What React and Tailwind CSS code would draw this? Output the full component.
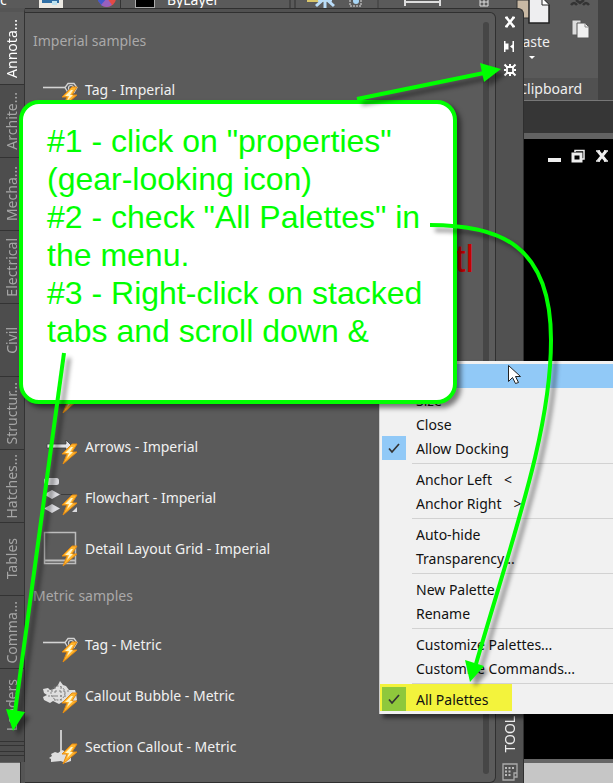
// src/App.jsx
import { useState } from 'react';

const TABS = [
  'Annota...',
  'Archite...',
  'Mecha...',
  'Electrical',
  'Civil',
  'Structur...',
  'Hatches...',
  'Tables',
  'Comma...',
  'Leaders',
];

const IMPERIAL = [
  { icon: 'tag', label: 'Tag - Imperial' },
  { icon: 'blank' },
  { icon: 'blank' },
  { icon: 'blank' },
  { icon: 'blank' },
  { icon: 'blank' },
  { icon: 'blank' },
  { icon: 'arrow', label: 'Arrows - Imperial' },
  { icon: 'flow', label: 'Flowchart - Imperial' },
  { icon: 'grid', label: 'Detail Layout Grid - Imperial' },
];

const METRIC = [
  { icon: 'tag', label: 'Tag - Metric' },
  { icon: 'bubble', label: 'Callout Bubble - Metric' },
  { icon: 'section', label: 'Section Callout - Metric' },
];

const MENU = [
  [{ label: 'Move' }, { label: 'Size' }, { label: 'Close' }, { label: 'Allow Docking', check: true }],
  [{ label: 'Anchor Left', hint: '<' }, { label: 'Anchor Right', hint: '>' }],
  [{ label: 'Auto-hide' }, { label: 'Transparency...' }],
  [{ label: 'New Palette' }, { label: 'Rename' }],
  [{ label: 'Customize Palettes...' }, { label: 'Customize Commands...' }],
];

function ToolIcon({ name }) {
  return (
    <svg viewBox="0 0 36 36" className="h-9 w-9 shrink-0 overflow-visible" aria-hidden="true">
      {name === 'tag' && (
        <g fill="none" stroke="#d4d4d4">
          <path d="M0 15.5H22" strokeWidth="1.6" />
          <path d="M25 11.5h6l3 4-3 5h-6l-3-5z" strokeWidth="1.3" />
          <circle cx="28" cy="16" r="2.5" strokeWidth="1.2" />
        </g>
      )}
      {name === 'arrow' && (
        <path d="M4 15h19v-4l6 6-6 6v-4H4z" fill="#e4e4e8" stroke="#3f3f3f" strokeWidth="0.8" />
      )}
      {name === 'flow' && (
        <g fill="#dcdce0">
          <rect x="1" y="-2" width="15" height="7" rx="2.5" />
          <path d="M9 10l8 4.500-8 4.500-8-4.500zM9 24l8 4.500-8 4.500-8-4.500z" />
          <path d="M29 32l5-5v5z" />
          <path d="M18 14.500h12v4" fill="none" stroke="#3c3c3c" />
        </g>
      )}
      {name === 'grid' && (
        <g fill="none" stroke="#bdbdbd" strokeWidth="1.500">
          <path d="M1.500 1.500h31v31h-31z" />
          <path d="M2 29.500h30" strokeWidth="2" />
        </g>
      )}
      {name === 'bubble' && (
        <g>
          <path
            d="M0 11l5-1 2 2 4-1 4-4 2-4 3 4 3 1 3 4h6l1 3 1 7-4 4-9-3-5 3-6-3-3 2-6-3-1-3 4-2-3-2z"
            fill="#dedede"
          />
          <circle cx="15" cy="15" r="7" fill="none" stroke="#777" strokeDasharray="2 1.500" />
          <path d="M4 13h22M5 18h19M12 9v14M18 9v14" stroke="#777" strokeWidth="0.9" strokeDasharray="2 2" />
        </g>
      )}
      {name === 'section' && (
        <g>
          <path d="M18 1V24" stroke="#c8c8c8" strokeWidth="2" />
          <path d="M8 25l4-2 3 1 4-3 5 2 4 2v7l-6 2-4-2-10 1v-3l-2-1 3-2z" fill="#dedede" />
        </g>
      )}
      {/* action bolt */}
      <path
        d="M29 15L19 25h5l-4 10L34 23h-5l5-8z"
        fill="#ffb52e"
        stroke="#e58a10"
        strokeWidth="1"
        strokeLinejoin="round"
      />
      <path d="M28 18l-6 6h4l-2 5 6-6h-3l3-5z" fill="#fff6c8" />
    </svg>
  );
}

function ToolList({ title, items, first }) {
  return (
    <section>
      <h2
        className={`flex items-center pl-2 text-sm text-[#aaa9a9] ${first ? 'h-[51px] pt-1' : 'h-[45px] pb-[2px]'}`}
      >
        {title}
      </h2>
      <ul>
        {items.map((item, i) => (
          <li key={i} className="h-[51px]">
            <button
              type="button"
              className="flex h-full w-full items-center gap-[6px] pl-[18px] text-left text-sm text-[#f1f1f1]"
              aria-label={item.label || 'Tool'}
            >
              <ToolIcon name={item.icon} />
              {item.label}
            </button>
          </li>
        ))}
      </ul>
    </section>
  );
}

function Ribbon() {
  return (
    <header className="flex h-[101px] overflow-hidden border-b border-[#777] bg-[#424242]">
      <div className="flex h-[9px] flex-1 bg-[#5a5a5a] text-sm text-white">
        <div className="flex h-0 w-full items-center">
          <span className="w-[38px]">c</span>
          <svg width="82" height="16" viewBox="0 0 82 16" className="shrink-0" aria-hidden="true">
            <path d="M1 0h24v16H1z" fill="#ece9e2" />
            <path d="M4 0h17v11H4z" fill="#3270a5" />
            <path d="M14 9h5v4h-5z" fill="#bfe3ef" />
            <circle cx="69" cy="6" r="9" fill="#e34a45" />
            <path d="M69 6L60 0v9l4 5z" fill="#4159cc" />
            <path d="M69 6L63 13a9 9 0 0 0 11 0z" fill="#9860bf" />
          </svg>
          <div className="flex items-center gap-3 border-l border-[#333] pl-[14px]">
            <span className="h-4 w-5 border border-[#aaa] bg-black" />
            <span>ByLayer</span>
          </div>
          <svg width="190" height="16" viewBox="0 0 190 16" className="ml-[70px] shrink-0 overflow-visible" aria-hidden="true">
            <path d="M1 0v16M6 0v16" stroke="#303030" />
            <path d="M18 0h20v10H18z" fill="#d9c66a" />
            <path d="M36 0v16M27 14l9-8 9 8M29 8h14" stroke="#b9dcf8" strokeWidth="3" fill="none" />
            <path d="M61 8v6h11V8" stroke="#ddd" fill="none" strokeDasharray="2 1" />
            <circle cx="67" cy="9" r="3" fill="#a9d6f5" />
            <path d="M89 0v16M210 0v16" stroke="#3c3c3c" />
            <path d="M116 6v8M151 6v8M116 10h35" stroke="#ddd" strokeWidth="2" />
            <path d="M191 6h8v8h-8zM195 6v8M191 10h8" stroke="#ddd" fill="none" />
          </svg>
        </div>
      </div>
      <div className="mr-[15px] flex w-[104px] shrink-0 flex-col bg-[#5a5a5a] text-sm text-[#eee]">
        <div className="flex flex-1 justify-between pl-[20px] pr-[6px]">
          <button type="button" className="flex flex-col items-center">
            <svg width="36" height="32" viewBox="0 0 36 32" aria-hidden="true">
              <path d="M3 0h15v18H3z" fill="#c9b9a4" stroke="#333" />
              <path d="M15 -2h13l7 7v18H15z" fill="#eeeef0" stroke="#222" strokeWidth="1.500" />
              <path d="M28 -2v7h7" fill="#fff" stroke="#222" />
            </svg>
            Paste
            <span className="mt-1 border-x-[3px] border-t-[3px] border-x-transparent border-t-white" />
          </button>
          <svg width="24" height="40" viewBox="0 0 24 40" aria-hidden="true">
            <path d="M3 5q3-4 6 0M21 5q-3-4-6 0M8 0l4 3 4-3" fill="none" stroke="#333" strokeWidth="2.500" />
            <path d="M4 20h9v15H4z" fill="#ddd" stroke="#555" />
            <path d="M9 23h8l4 4v11H9z" fill="#f0f0f0" stroke="#555" />
            <path d="M17 23v4h4" fill="none" stroke="#888" />
          </svg>
        </div>
        <div className="flex h-[22px] items-center justify-end bg-[#515151] pr-4">Clipboard</div>
      </div>
    </header>
  );
}

function DrawingWindow() {
  return (
    <main className="flex flex-1 flex-col">
      <div className="h-8 bg-[#363636]" />
      <div className="h-[6px] bg-[#626262]" />
      <div className="flex flex-1 items-start justify-end gap-[10px] bg-black pr-1 pt-[10px]">
        <button type="button" aria-label="Minimize">
          <svg width="14" height="14" viewBox="0 0 14 14">
            <path d="M1 9h13v4H1z" fill="#eee" />
          </svg>
        </button>
        <button type="button" aria-label="Restore">
          <svg width="14" height="14" viewBox="0 0 14 14">
            <path d="M4 3V1.500h9V10h-2" fill="none" stroke="#eee" strokeWidth="1.500" />
            <path d="M2 5h8v7H2z" fill="none" stroke="#eee" strokeWidth="3" />
            <path d="M5 8h2v2H5z" fill="#000" />
          </svg>
        </button>
        <button type="button" aria-label="Close drawing">
          <svg width="14" height="14" viewBox="0 0 14 14">
            <path d="M3 2l8 10M11 2L3 12" stroke="#eee" strokeWidth="3" />
            <path d="M1 2h4M9 2h4M1 12h4M9 12h4" stroke="#eee" strokeWidth="1.500" />
          </svg>
        </button>
      </div>
      <div className="h-6 border-t-4 border-[#666] bg-[#c6c6c6]" />
    </main>
  );
}

function ToolPalette() {
  const [tab, setTab] = useState(0);

  return (
    <aside className="absolute bottom-0 left-0 right-[89px] top-2 flex">
      {/* stacked tabs */}
      <div className="flex w-[25px] shrink-0 flex-col">
        <nav className="flex flex-col border-r border-t-4 border-[#333] border-t-[#555] bg-[#4d4d4d]">
          {TABS.map((name, i) => (
            <button
              key={name}
              type="button"
              onClick={() => setTab(i)}
              className={`flex h-[73px] items-center justify-center border-b border-[#333] text-sm ${
                i === tab ? 'bg-[#5b5b5b] text-white' : 'text-[#a5a5a5]'
              }`}
            >
              <span className="rotate-180 whitespace-nowrap [writing-mode:vertical-rl]">{name}</span>
            </button>
          ))}
          <span className="h-1 border-b border-[#333]" />
          <span className="h-[6px] border-b border-[#333]" />
          <span className="h-1 border-b border-[#333]" />
          <span className="h-[6px]" />
        </nav>
        <div className="ml-5 flex-1 border-l border-[#333] bg-[#555]" />
      </div>

      <div className="flex flex-1 rounded-tr-md border-r border-t border-[#2f2f2f] bg-[#515151] pt-[3px]">
        <div className="relative flex flex-1 justify-between rounded-r-md border-b border-r border-t border-[#303030] bg-[#5b5b5b]">
          <div className="flex-1">
            <ToolList title="Imperial samples" items={IMPERIAL} first />
            <ToolList title="Metric samples" items={METRIC} />
          </div>
          <p className="absolute right-[21px] top-[224px] font-['Liberation_Sans',sans-serif] text-[38px] leading-[44px] text-[#c40000]">
            tl
          </p>
          <div className="mb-2 mr-[6px] mt-[9px] w-[6px] rounded-full bg-[#464646]" />
        </div>

        <div className="flex w-[27px] flex-col items-center gap-[10px] pb-[2px] pt-[3px]">
          <button type="button" aria-label="Close palette">
            <svg width="14" height="14" viewBox="0 0 14 14">
              <path d="M3 2l8 10M11 2L3 12" stroke="#fff" strokeWidth="2.600" />
              <path d="M2 2.500h3M9 2.500h3M2 11.500h3M9 11.500h3" stroke="#fff" strokeWidth="1.500" />
            </svg>
          </button>
          <button type="button" aria-label="Auto-hide">
            <svg width="14" height="14" viewBox="0 0 14 14">
              <path d="M1 2h1.500v11H1zM2.500 4.500h3v6h-3zM11 2v11H9.500V9.500L7 7.500l2.500-2V2z" fill="#fff" />
            </svg>
          </button>
          <button type="button" aria-label="Properties">
            <svg width="14" height="14" viewBox="0 0 14 14">
              <path d="M4 4h6v6H4z" fill="none" stroke="#fff" strokeWidth="1.800" />
              <path
                d="M7 1v2M7 11v2M1 7h2M11 7h2M1.500 1.500l3 3M12.500 1.500l-3 3M1.500 12.500l3-3M12.500 12.500l-3-3"
                stroke="#fff"
                strokeWidth="2"
              />
            </svg>
          </button>
          <span className="mt-auto rotate-180 whitespace-nowrap text-sm text-[#eee] [writing-mode:vertical-rl]">
            TOOL PALETTES
          </span>
          <svg width="16" height="18" viewBox="0 0 16 18" aria-hidden="true">
            <path d="M1 1h14v9h-3v7H1zM12 10h3v4h-3" fill="none" stroke="#aaa" strokeWidth="1.300" />
            <path d="M3 5h2M6.500 5h2M10 5h2M3 8.500h2M6.500 8.500h2M3 12h2M6.500 12h2" stroke="#bbb" strokeWidth="2" />
          </svg>
        </div>
      </div>
    </aside>
  );
}

function CheckMark() {
  return (
    <svg width="14" height="14" viewBox="0 0 14 14" aria-hidden="true">
      <path d="M2 7.500l3 3.500 7-8" fill="none" stroke="#333" strokeWidth="1.700" />
    </svg>
  );
}

function ContextMenu() {
  const [docking, setDocking] = useState(true);
  const [all, setAll] = useState(true);

  return (
    <div
      role="menu"
      className="absolute left-[379px] right-0 top-[361px] border-l border-[#ccc] bg-[#f1f1f1] py-[3px] text-sm text-[#111] shadow-[4px_4px_4px_rgba(0,0,0,0.5)]"
    >
      {MENU.map((group, g) => (
        <div key={g}>
          {group.map((item, i) => (
            <button
              key={item.label}
              type="button"
              role={item.check ? 'menuitemcheckbox' : 'menuitem'}
              aria-checked={item.check ? docking : undefined}
              onClick={item.check ? () => setDocking((d) => !d) : undefined}
              className={`flex h-6 w-full items-center gap-[10px] pl-[2px] text-left ${
                g === 0 && i === 0 ? 'bg-[#91c9f7]' : ''
              }`}
            >
              <span
                className={`flex h-6 w-6 items-center justify-center ${
                  item.check && docking ? 'bg-[#91c9f7]' : ''
                }`}
              >
                {item.check && docking && <CheckMark />}
              </span>
              <span className="pt-[2px]">{item.label}</span>
              {item.hint && <span className="pl-[2px] pt-[2px]">{item.hint}</span>}
            </button>
          ))}
          <hr className="my-[3px] ml-8 border-[#d2d2d2]" />
        </div>
      ))}
      <button
        type="button"
        role="menuitemcheckbox"
        aria-checked={all}
        onClick={() => setAll((a) => !a)}
        className="-mt-[3px] flex h-[27px] w-[132px] items-center gap-[10px] bg-[#f3f33c] pl-[2px] pt-[3px] text-left"
      >
        <span className="flex h-6 w-6 items-center justify-center bg-[#8fc83c]">{all && <CheckMark />}</span>
        <span className="pt-[2px]">All Palettes</span>
      </button>
    </div>
  );
}

function Callout() {
  return (
    <div className="absolute left-[19px] right-[156px] top-[100px] rounded-[20px] border-4 border-[#00ff00] bg-white pb-[50px] pl-[24px] pt-[18px] font-['Liberation_Sans',sans-serif] text-[32px] leading-[38px] text-[#00ff00] shadow-[4px_4px_5px_rgba(0,0,0,0.5)]">
      <p>
        #1 - click on "properties"
        <br />
        (gear-looking icon)
      </p>
      <p>
        #2 - check "All Palettes" in
        <br />
        the menu.
      </p>
      <p>
        #3 - Right-click on stacked
        <br />
        tabs and scroll down &amp;
      </p>
    </div>
  );
}

function Arrows() {
  return (
    <svg
      width="613"
      height="783"
      viewBox="0 0 613 783"
      className="pointer-events-none absolute left-0 top-0 drop-shadow-[5px_5px_2px_rgba(0,0,0,0.4)]"
      aria-hidden="true"
    >
      <g fill="none" stroke="#00ff00" strokeWidth="4">
        <path d="M357 99L484 73" />
        <path d="M430 225C500 225 551 245 551 340C551 430 515 530 476 664" />
        <path d="M64 353L15 712" />
      </g>
      <g fill="#00ff00">
        <path d="M501 69L480 63L484 82z" />
        <path d="M470 682L465 660L484 666z" />
        <path d="M13 731L6 709L25 712z" />
      </g>
    </svg>
  );
}

export default function App() {
  return (
    <div className="relative flex min-h-screen flex-col overflow-hidden bg-black font-['Noto_Sans','Open_Sans',sans-serif]">
      <Ribbon />
      <DrawingWindow />
      <ToolPalette />
      <ContextMenu />
      <svg width="13" height="20" viewBox="0 0 13 20" className="absolute left-[508px] top-[365px]" aria-hidden="true">
        <path d="M.5.5v16l4-4 3 6 3-1-3-6h5z" fill="#fff" stroke="#222" />
      </svg>
      <Callout />
      <Arrows />
    </div>
  );
}
